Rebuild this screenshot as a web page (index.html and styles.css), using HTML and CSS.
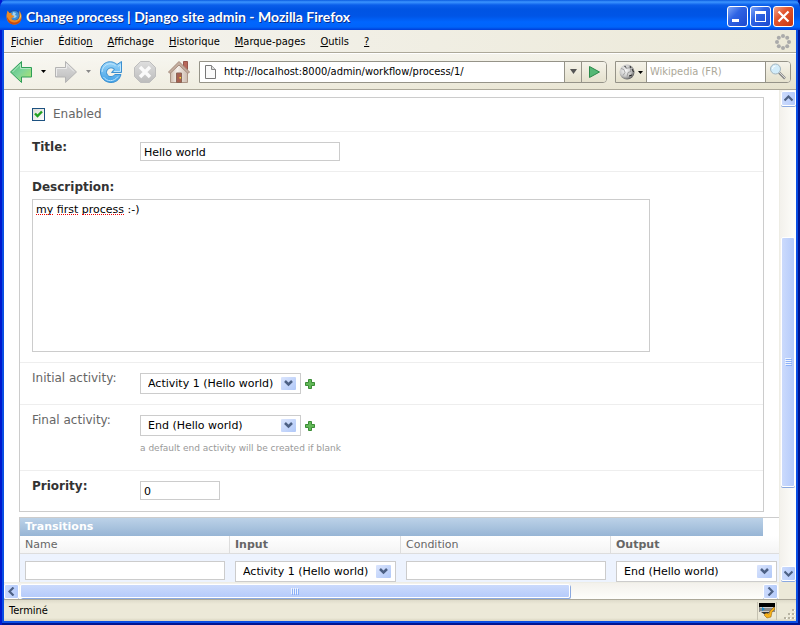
FILE: index.html
```html
<!DOCTYPE html>
<html lang="fr">
<head>
<meta charset="utf-8">
<title>Change process | Django site admin</title>
<link rel="stylesheet" href="styles.css">
</head>
<body>
<div class="window">
  <header class="titlebar">
    <svg class="app-icon" width="16" height="16" viewBox="0 0 16 16" aria-hidden="true">
      <circle cx="8" cy="8" r="7" fill="#1c4fa4"/>
      <circle cx="8.500" cy="6.500" r="4.500" fill="#3f8fd6"/>
      <path d="M7 3l3 1-1 2 2 1-2 2-3-1z" fill="#a5d4f0"/>
      <path d="M1.500 1.500L.5 6C0 12 4 16 9 15.500C14 15 16 11 15.500 6L13.500 1.500L13.500 7C13 11 10 12 7 11C5 10 5 8.500 7 8.500L8.500 7L5.500 6L5.500 4L3.500 4Z" fill="#ee8a21"/>
      <path d="M1 8C1 13 5 16 9 15.500C13 15 15 12 15.500 9C13 14 6 15 3 11Z" fill="#c8480f"/>
      <path d="M13.500 2L14 8L12 11L15 8Z" fill="#ffda5c"/>
    </svg>
    <h1 class="window-title">Change process | Django site admin - Mozilla Firefox</h1>
    <div class="window-buttons">
      <button class="win-btn" aria-label="Réduire"><svg width="19" height="19" viewBox="0 0 19 19"><path d="M4 12h7v3H4z" fill="#fff"/></svg></button>
      <button class="win-btn" aria-label="Agrandir"><svg width="19" height="19" viewBox="0 0 19 19"><path d="M4 4h11v11H4zM5 7v7h9V7z" fill="#fff" fill-rule="evenodd"/></svg></button>
      <button class="win-btn win-close" aria-label="Fermer"><svg width="19" height="19" viewBox="0 0 19 19"><path d="M4.500 4.500l10 10M14.500 4.500l-10 10" stroke="#fff" stroke-width="2.200"/></svg></button>
    </div>
  </header>

  <nav class="menubar">
    <a href="#"><u>F</u>ichier</a>
    <a href="#">Éditio<u>n</u></a>
    <a href="#"><u>A</u>ffichage</a>
    <a href="#"><u>H</u>istorique</a>
    <a href="#"><u>M</u>arque-pages</a>
    <a href="#"><u>O</u>utils</a>
    <a href="#"><u>?</u></a>
    <svg class="throbber" width="16" height="16" viewBox="0 0 16 16" fill="#aaa" aria-hidden="true">
      <circle cx="8" cy="2" r="2"/><circle cx="12.200" cy="3.800" r="2"/><circle cx="14" cy="8" r="2"/><circle cx="12.200" cy="12.200" r="2"/><circle cx="8" cy="14" r="2"/><circle cx="3.800" cy="12.200" r="2"/><circle cx="2" cy="8" r="2"/><circle cx="3.800" cy="3.800" r="2"/>
    </svg>
  </nav>

  <div class="toolbar">
    <svg width="0" height="0" class="defs" aria-hidden="true">
      <defs>
        <linearGradient id="green" x1="0" y1="0" x2="1" y2="1"><stop offset="0" stop-color="#4fbd7c"/><stop offset=".5" stop-color="#7fd49a"/><stop offset="1" stop-color="#b5e66a"/></linearGradient>
        <linearGradient id="grey" x1="0" y1="0" x2="0" y2="1"><stop offset="0" stop-color="#dedede"/><stop offset="1" stop-color="#bcbcbc"/></linearGradient>
        <linearGradient id="blue" x1="0" y1="0" x2="0" y2="1"><stop offset="0" stop-color="#9bd6fa"/><stop offset="1" stop-color="#3fa0e6"/></linearGradient>
        <linearGradient id="wall" x1="0" y1="0" x2="1" y2="0"><stop offset="0" stop-color="#cfbcae"/><stop offset=".4" stop-color="#f6f1ec"/><stop offset="1" stop-color="#cdbbae"/></linearGradient>
        <radialGradient id="globe" cx=".4" cy=".4" r=".65"><stop offset="0" stop-color="#fafafa"/><stop offset=".6" stop-color="#c8c8c8"/><stop offset="1" stop-color="#555"/></radialGradient>
      </defs>
    </svg>
    <div class="nav-buttons">
      <button class="tool" aria-label="Précédent"><svg width="24" height="24" viewBox="0 0 24 24"><path d="M1.500 12L12.500 1.500V7.500H22.500V17H12.500V22.500Z" fill="url(#green)" stroke="#2f9e58"/><path d="M3.500 12L11.500 4V8.500H21.500" fill="none" stroke="#b2e8c4"/></svg></button>
      <button class="tool-menu" aria-label="Historique précédent"><svg width="5" height="3" viewBox="0 0 5 3"><path d="M0 0h5L2.500 3z" fill="#000"/></svg></button>
      <button class="tool" aria-label="Suivant"><svg width="24" height="24" viewBox="0 0 24 24"><path d="M22.500 12L11.500 1.500V7.500H1.500V17H11.500V22.500Z" fill="url(#grey)" stroke="#b4b4b4"/><path d="M2.500 16V8.500H12.500V4L20 11.500" fill="none" stroke="#ececec"/></svg></button>
      <button class="tool-menu" aria-label="Historique suivant"><svg width="5" height="3" viewBox="0 0 5 3"><path d="M0 0h5L2.500 3z" fill="#888"/></svg></button>
      <button class="tool tool-wide" aria-label="Actualiser"><svg width="24" height="24" viewBox="0 0 24 24"><path d="M18 4.500L22.500 1.500V12.500H12.500L15.500 9C12 6.500 7.500 8.500 7.500 12.500C8 17 13 18 16 14.500H22C20.500 20 16.500 22.500 12 22.500C6 22.500 1.500 18 1.500 12C1.500 2 12-1 18 4.500Z" fill="url(#blue)" stroke="#3a8fd0"/><path d="M3 12C3.500 4.500 11 1.500 16.500 5.500M19 6.500L21.500 4.500V11.500H15M4.500 17C8 22 15 22 19 16.500" fill="none" stroke="#bfe5fd"/></svg></button>
      <button class="tool tool-wide" aria-label="Arrêter"><svg width="24" height="24" viewBox="0 0 24 24"><path d="M7.500 1.500H16.500L22.500 7.500V16.500L16.500 22.500H7.500L1.500 16.500V7.500Z" fill="url(#grey)" stroke="#bdbdbd"/><path d="M7 7L17 17M17 7L7 17" stroke="#fafafa" stroke-width="3.500"/></svg></button>
      <button class="tool tool-wide" aria-label="Accueil"><svg width="24" height="24" viewBox="0 0 24 24"><path d="M16.500 1.500h4v8h-4z" fill="#b9685a" stroke="#96574c"/><path d="M3.500 11L12 3l8.500 8v11.500h-17z" fill="url(#wall)" stroke="#ab9485"/><path d="M12 1.500L1.500 12l1.500 1.500L12 5l9 8.500L22.500 12z" fill="#c5aea0" stroke="#a58c7d"/><path d="M9.500 13h5v9.500h-5z" fill="#a86050" stroke="#8b6556"/><path d="M12.500 17h1.500v1.500h-1.500z" fill="#ffe436"/></svg></button>
    </div>
    <div class="urlbar">
      <svg class="page-icon" width="13" height="16" viewBox="0 0 13 16" aria-hidden="true"><path d="M1.500 1.500h6l4 4v9h-10z" fill="#fafafa" stroke="#777"/><path d="M7.500 1.500v4h4" fill="#ddd" stroke="#888"/></svg>
      <input class="url-input" type="text" aria-label="Adresse" value="http://localhost:8000/admin/workflow/process/1/">
      <button class="bar-btn url-drop" aria-label="Adresses récentes"><svg width="7" height="5" viewBox="0 0 7 5"><path d="M0 0h7L3.500 5z" fill="#555"/></svg></button>
      <button class="bar-btn url-go" aria-label="Aller"><svg width="13" height="14" viewBox="0 0 13 14"><path d="M1.500 1.500L11.500 7L1.500 12.500Z" fill="#54b875" stroke="#2c8a4b"/></svg></button>
    </div>
    <div class="searchbar">
      <button class="bar-btn engine" aria-label="Moteur de recherche"><svg width="24" height="16" viewBox="0 0 24 16"><circle cx="8" cy="8" r="7.500" fill="url(#globe)"/><path d="M2 4.500l3 1 1 3-2 3M6 1.500l1 3 4-1 1 4-3 1-1 4" fill="none" stroke="#888" stroke-width=".7"/><path d="M11 2l1 2M13 5l1.500 3M5.500 2L7 3.500M10 12l3-1" stroke="#222"/><path d="M19 7h5l-2.500 3z" fill="#000"/></svg></button>
      <input class="search-input" type="text" aria-label="Rechercher" placeholder="Wikipedia (FR)">
      <button class="bar-btn search-go" aria-label="Lancer la recherche"><svg width="18" height="17" viewBox="0 0 18 17"><path d="M10 9.500l6 6" stroke="#888" stroke-width="2.500"/><path d="M10 9l6 6" stroke="#d8d8d8"/><circle cx="6.500" cy="6" r="5" fill="#d2ecfa" stroke="#a3b5bf"/><path d="M3.500 6a3 3 0 0 1 3-3" fill="none" stroke="#fff"/></svg></button>
    </div>
  </div>

  <div class="viewport">
    <main class="page">
      <form>
        <section class="module">
          <div class="row row-check">
            <span class="check"><input type="checkbox" id="enabled" checked><svg width="9" height="9" viewBox="0 0 9 9" aria-hidden="true"><path d="M1 3.500L3.500 6L8 1.500" fill="none" stroke="#21a121" stroke-width="2.400"/></svg></span>
            <label for="enabled">Enabled</label>
          </div>
          <div class="row">
            <label class="required" for="title">Title:</label>
            <div class="field"><input class="text" type="text" id="title" value="Hello world"></div>
          </div>
          <div class="row row-stacked">
            <label class="required" for="description">Description:</label>
            <div class="editor">
              <textarea id="description" spellcheck="false">my first process :-)</textarea>
              <div class="spelling" aria-hidden="true"><i class="w-my"></i><i class="w-first"></i><i class="w-process"></i></div>
            </div>
          </div>
          <div class="row">
            <label for="initial">Initial activity:</label>
            <div class="field">
              <div class="related">
                <span class="select"><select id="initial"><option>Activity 1 (Hello world)</option></select><svg width="15" height="13" viewBox="0 0 15 13" aria-hidden="true"><path d="M4 4l3.500 3.500L11 4" fill="none" stroke="#4d6185" stroke-width="2.500"/></svg></span>
                <a class="add" href="#" aria-label="Add"><svg width="10" height="10" viewBox="0 0 10 10"><path d="M3.500.5h3v3h3v3h-3v3h-3v-3h-3v-3h3z" fill="#62b857" stroke="#3b8c36"/></svg></a>
              </div>
            </div>
          </div>
          <div class="row">
            <label for="final">Final activity:</label>
            <div class="field">
              <div class="related">
                <span class="select"><select id="final"><option>End (Hello world)</option></select><svg width="15" height="13" viewBox="0 0 15 13" aria-hidden="true"><path d="M4 4l3.500 3.500L11 4" fill="none" stroke="#4d6185" stroke-width="2.500"/></svg></span>
                <a class="add" href="#" aria-label="Add"><svg width="10" height="10" viewBox="0 0 10 10"><path d="M3.500.5h3v3h3v3h-3v3h-3v-3h-3v-3h3z" fill="#62b857" stroke="#3b8c36"/></svg></a>
              </div>
              <p class="help">a default end activity will be created if blank</p>
            </div>
          </div>
          <div class="row">
            <label class="required" for="priority">Priority:</label>
            <div class="field"><input class="text text-short" type="text" id="priority" value="0"></div>
          </div>
        </section>

        <section class="inline-group">
          <h2>Transitions</h2>
          <table>
            <thead>
              <tr><th class="col-text optional">Name</th><th class="col-select">Input</th><th class="col-text optional">Condition</th><th class="col-select">Output</th></tr>
            </thead>
            <tbody>
              <tr>
                <td><input class="text" type="text" aria-label="Name"></td>
                <td><span class="select"><select aria-label="Input"><option>Activity 1 (Hello world)</option></select><svg width="15" height="13" viewBox="0 0 15 13" aria-hidden="true"><path d="M4 4l3.500 3.500L11 4" fill="none" stroke="#4d6185" stroke-width="2.500"/></svg></span></td>
                <td><input class="text" type="text" aria-label="Condition"></td>
                <td><span class="select"><select aria-label="Output"><option>End (Hello world)</option></select><svg width="15" height="13" viewBox="0 0 15 13" aria-hidden="true"><path d="M4 4l3.500 3.500L11 4" fill="none" stroke="#4d6185" stroke-width="2.500"/></svg></span></td>
              </tr>
            </tbody>
          </table>
        </section>
      </form>
    </main>
    <div class="scroll scroll-v">
      <button class="scroll-btn" aria-label="Haut"><svg width="9" height="7" viewBox="0 0 9 7"><path d="M.5 5.500l4-4 4 4" fill="none" stroke="#4d6185" stroke-width="2.200"/></svg></button>
      <div class="gap-before"></div>
      <div class="thumb"><svg width="7" height="8" viewBox="0 0 7 8"><path d="M0 .5h6M0 2.500h6M0 4.500h6M0 6.500h6" stroke="#eef4fe"/><path d="M1 1.500h6M1 3.500h6M1 5.500h6M1 7.500h6" stroke="#8cb0f8"/></svg></div>
      <div class="gap-after"></div>
      <button class="scroll-btn" aria-label="Bas"><svg width="9" height="7" viewBox="0 0 9 7"><path d="M.5 1.500l4 4 4-4" fill="none" stroke="#4d6185" stroke-width="2.200"/></svg></button>
    </div>
    <div class="scroll scroll-h">
      <button class="scroll-btn" aria-label="Gauche"><svg width="7" height="9" viewBox="0 0 7 9"><path d="M5.500.5l-4 4 4 4" fill="none" stroke="#4d6185" stroke-width="2.200"/></svg></button>
      <div class="thumb"><svg width="8" height="7" viewBox="0 0 8 7"><path d="M.5 0v6M2.500 0v6M4.500 0v6M6.500 0v6" stroke="#eef4fe"/><path d="M1.500 1v6M3.500 1v6M5.500 1v6M7.500 1v6" stroke="#8cb0f8"/></svg></div>
      <div class="gap-after"></div>
      <button class="scroll-btn" aria-label="Droite"><svg width="7" height="9" viewBox="0 0 7 9"><path d="M1.500.5l4 4-4 4" fill="none" stroke="#4d6185" stroke-width="2.200"/></svg></button>
    </div>
  </div>

  <footer class="statusbar">
    <span class="status-text">Terminé</span>
    <span class="status-icon"><svg width="16" height="16" viewBox="0 0 16 16" aria-hidden="true"><path d="M0 0h16v4H0z" fill="#000"/><path d="M0 4h16v5H0z" fill="#8a8a8a"/><path d="M1 4.500h13M1 8.500h9" stroke="#ccc"/><path d="M3 4l3 2-3 2z" fill="#168bd0"/><path d="M2 9h9l-3 2H5z" fill="#333"/><path d="M15 4l-4 4-1 3-3-1-2 2 3 3 4-1 1-5 3-3z" fill="#f6b11b" stroke="#8d5b0a" stroke-width=".5"/></svg></span>
    <svg class="grip" width="11" height="11" viewBox="0 0 11 11" fill="#b8b4a3" aria-hidden="true"><path d="M8 0h2v2H8zM4 4h2v2H4zM8 4h2v2H8zM0 8h2v2H0zM4 8h2v2H4zM8 8h2v2H8z"/><path d="M9 2h2V1h-1v1zM5 6h2V5H6v1zM9 6h2V5h-1v1zM1 10h2V9H2v1zM5 10h2V9H6v1zM9 10h2V9h-1v1z" fill="#fff"/></svg>
  </footer>
</div>
</body>
</html>
```
FILE: styles.css
```css
* {
  box-sizing: border-box;
}

body {
  margin: 0;
  background: #0a1a6a;
}

button {
  margin: 0;
  padding: 0;
  border: 0;
  background: none;
}

svg {
  display: block;
  flex: none;
}

input,
select,
textarea {
  margin: 0;
  border-radius: 0;
  outline: 0;
}

.window {
  display: flex;
  flex-direction: column;
  height: 100vh;
  padding: 0 4px 4px;
  overflow: hidden;
  background: #0a4ee4;
  box-shadow: inset 2px 0 #0019cf, inset -2px 0 #001590, inset 0 -2px #001590;
  font: 11px/14px "DejaVu Sans Condensed", "DejaVu Sans", sans-serif;
  color: #000;
}

/* Title bar */

.titlebar {
  display: flex;
  flex: none;
  align-items: center;
  height: 30px;
  margin: 0 -4px;
  padding: 3px 6px 0;
  gap: 4px;
  border-radius: 7px 7px 0 0;
  background: linear-gradient(#0a5be0 0, #3c95ff 2px, #0a5eea 5px, #0054e3 9px, #0055e6 16px, #0066ff 22px, #0064fa 27px, #003dd7 30px);
}

.window-title {
  flex: 1;
  margin: 0;
  overflow: hidden;
  font: bold 14px/18px Lato, sans-serif;
  white-space: nowrap;
  color: #fff;
  text-shadow: 1px 1px #0a2f8c;
}

.window-buttons {
  display: flex;
  gap: 2px;
}

.win-btn {
  width: 21px;
  height: 21px;
  border: 1px solid #fff;
  border-radius: 3px;
  background: linear-gradient(135deg, #7ea6f8, #2f64e4 40%, #1c48cf);
}

.win-close {
  background: linear-gradient(135deg, #f2a48c, #e2552f 40%, #c8360f);
}

/* Menus and navigation */

.menubar {
  display: flex;
  flex: none;
  align-items: center;
  height: 23px;
  padding: 1px 5px 0 7px;
  gap: 15px;
  border-bottom: 1px solid #aca899;
  background: linear-gradient(90deg, #f5f4f0, #ece9d8);
}

.menubar a {
  color: inherit;
  text-decoration: none;
}

.throbber {
  margin-left: auto;
}

.toolbar {
  display: flex;
  flex: none;
  align-items: center;
  height: 37px;
  padding: 0 5px;
  gap: 8px;
  border-top: 1px solid #fff;
  border-bottom: 1px solid #aca899;
  background: linear-gradient(90deg, rgba(255, 255, 255, .5), rgba(255, 255, 255, 0)), linear-gradient(#f2f0e6, #e6e2cd);
}

.defs {
  position: absolute;
}

.nav-buttons {
  display: flex;
  align-items: center;
}

.tool-menu {
  width: 21px;
  height: 24px;
  padding-left: 8px;
}

.tool-wide {
  width: 34px;
}

.tool-wide:last-child {
  width: 24px;
}

.urlbar,
.searchbar {
  display: flex;
  align-items: center;
  height: 22px;
  border: 1px solid #959388;
  border-radius: 0 4px 4px 0;
  background: #fff;
}

.urlbar {
  flex: 1;
  padding-left: 4px;
}

.url-input,
.search-input {
  flex: 1;
  min-width: 0;
  border: 0;
  background: none;
  font: inherit;
}

.url-input {
  padding: 1px 7px 0;
}

.search-input {
  padding: 1px 3px 0;
}

.search-input::placeholder {
  color: #aca899;
  opacity: 1;
}

.bar-btn {
  display: flex;
  align-items: center;
  justify-content: center;
  height: 20px;
  border-left: 1px solid #959388;
  background: linear-gradient(#f5f3ea, #e5e1cd);
}

.url-drop {
  width: 17px;
}

.url-go {
  width: 25px;
  border-radius: 0 3px 3px 0;
}

.searchbar {
  width: 176px;
}

.engine {
  width: 31px;
  border-right: 1px solid #959388;
  border-left: 0;
}

.search-go {
  width: 25px;
  border-radius: 0 3px 3px 0;
}

/* Scrolled area */

.viewport {
  display: grid;
  flex: 1;
  grid-template-columns: minmax(0, 1fr) 17px;
  grid-template-rows: minmax(0, 1fr) 17px;
  min-height: 0;
  background: #ece9d8;
}

.page {
  padding: 7px 0 0 15px;
  overflow: hidden;
  background: #fff;
  font: 11px/14px "DejaVu Sans", sans-serif;
}

.module {
  margin-right: 15px;
  border: 1px solid #ccc;
}

.row {
  display: flex;
  padding: 10px 12px;
  border-bottom: 1px solid #eee;
  color: #666;
}

.row label {
  width: 108px;
  margin-top: -3px;
  font-size: 12px;
  line-height: 16px;
}

.row .required {
  font-weight: bold;
  color: #333;
}

.row-check {
  align-items: center;
  padding: 8px 12px 9px;
  gap: 8px;
}

.row-check label {
  width: auto;
  margin: 0;
}

.row-stacked {
  flex-direction: column;
  gap: 4px;
}

.row:last-child {
  border-bottom-color: #fff;
}

.check {
  display: grid;
  width: 13px;
  height: 13px;
}

.check input,
.check svg {
  grid-area: 1 / 1;
}

.check svg {
  place-self: center;
  pointer-events: none;
}

.check input {
  width: 13px;
  height: 13px;
  border: 1px solid #1d5281;
  background: linear-gradient(135deg, #dcdcd7, #fff);
  appearance: none;
}

.text {
  display: block;
  width: 200px;
  height: 19px;
  padding: 2px 3px 0;
  border: 1px solid #ccc;
  background: #fff;
  font: inherit;
  color: #000;
}

.text-short {
  width: 80px;
}

.editor {
  position: relative;
  max-width: 618px;
}

textarea {
  display: block;
  width: 100%;
  height: 153px;
  padding: 3px 3px 2px;
  border: 1px solid #ccc;
  font: inherit;
  color: #000;
  resize: none;
}

.spelling {
  position: absolute;
  top: 15px;
  left: 4px;
  display: flex;
  gap: 4px;
  pointer-events: none;
}

.spelling i {
  border-bottom: 1px dotted #e00;
}

.w-my {
  width: 17px;
}

.w-first {
  width: 21px;
}

.w-process {
  width: 42px;
}

.related {
  display: flex;
  align-items: center;
  gap: 4px;
}

.select {
  display: inline-grid;
  align-items: center;
  width: 161px;
  vertical-align: top;
}

.select select,
.select svg {
  grid-area: 1 / 1;
}

.select select {
  width: 100%;
  height: 21px;
  padding: 1px 20px 0 7px;
  border: 1px solid #ccc;
  background: #fff;
  font: inherit;
  color: #000;
  appearance: none;
}

.select svg {
  justify-self: end;
  margin-right: 5px;
  border-radius: 1px;
  background: linear-gradient(135deg, #dbe5fd, #b0c8f8);
  pointer-events: none;
}

.help {
  margin: 5px 0;
  font-size: 9px;
  line-height: 14px;
  color: #999;
}

.inline-group {
  margin-top: 5px;
  border-top: 1px solid #ccc;
  border-left: 1px solid #ccc;
}

.inline-group h2 {
  margin: 0 16px 0 0;
  padding: 2px 5px;
  background: linear-gradient(#bcd2e8, #97b5d5);
  font-size: 11px;
  line-height: 14px;
  color: #fff;
}

table {
  width: 762px;
  border-spacing: 0;
  table-layout: fixed;
}

th {
  padding: 2px 5px 1px;
  border-right: 1px solid #ddd;
  border-bottom: 1px solid #ddd;
  background: linear-gradient(#fff, #f4f4f4);
  line-height: 14px;
  text-align: left;
  color: #666;
}

.optional {
  font-weight: normal;
}

.col-text {
  width: 210px;
}

.col-select {
  width: 171px;
}

td {
  padding: 7px 5px;
  background: #edf3fe;
  vertical-align: top;
}

/* Scroll bars */

.scroll {
  display: flex;
  padding: 1px;
  gap: 1px;
}

.scroll-v {
  flex-direction: column;
  border-left: 1px solid #eeede5;
  background: linear-gradient(90deg, #f3f1ec, #fefefb);
}

.scroll-h {
  padding-left: 0;
  border-top: 1px solid #eeede5;
  background: linear-gradient(#f3f1ec, #fefefb);
}

.scroll-btn,
.thumb {
  display: flex;
  align-items: center;
  justify-content: center;
  border: 1px solid #fff;
  border-radius: 2px;
  background: linear-gradient(90deg, #cbdafc, #b5cbfb);
  box-shadow: 0 1px #8ba9e0;
}

.scroll-btn {
  flex: none;
  width: 15px;
  height: 15px;
}

.scroll-v .gap-before {
  flex: 130;
}

.scroll-v .thumb {
  flex: 250;
}

.scroll-v .gap-after {
  flex: 78;
}

.scroll-h .thumb {
  flex: 550;
  background: linear-gradient(#cbdafc, #b5cbfb);
  box-shadow: 1px 1px #8ba9e0;
}

.scroll-h .gap-after {
  flex: 192;
}

/* Status bar */

.statusbar {
  display: flex;
  flex: none;
  align-items: center;
  height: 22px;
  padding-left: 5px;
  border-top: 1px solid #aca899;
  background: linear-gradient(#dedbca, #ece9d8 4px, #ece9d8 18px, #d8d4c0);
}

.status-text {
  flex: 1;
}

.status-icon {
  padding: 1px;
  border-right: 1px solid #c5c2b2;
  border-left: 1px solid #c5c2b2;
}

.grip {
  align-self: flex-end;
  margin: 0 1px 1px 7px;
}
```
